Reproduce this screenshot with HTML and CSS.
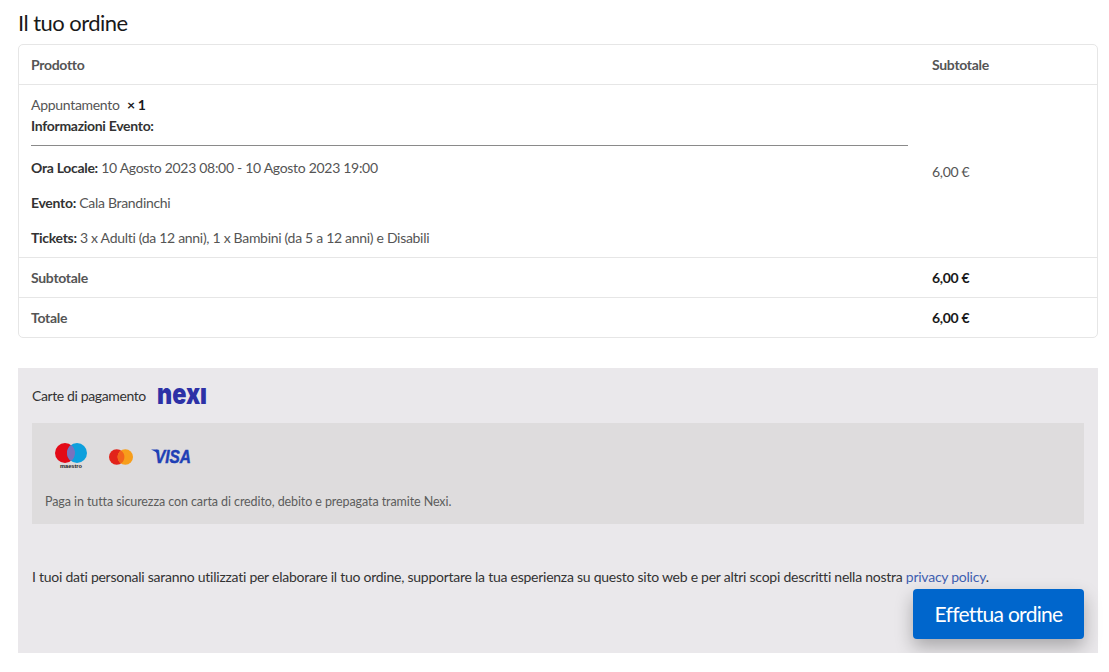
FILE: index.html
```html
<!DOCTYPE html>
<html lang="it">
<head>
<meta charset="utf-8">
<title>Il tuo ordine</title>
<link rel="stylesheet" href="styles.css">
</head>
<body>
<main class="page">
  <h3 class="title">Il tuo ordine</h3>
  <div class="order">
    <div class="row head">
      <div class="col-a strong">Prodotto</div>
      <div class="col-b strong">Subtotale</div>
    </div>
    <div class="row item">
      <div class="col-a">
        <div class="line">Appuntamento <b class="qty">× 1</b></div>
        <div class="line"><b>Informazioni Evento:</b></div>
        <hr class="rule">
        <p class="info"><b>Ora Locale:</b> 10 Agosto 2023 08:00 - 10 Agosto 2023 19:00</p>
        <p class="info"><b>Evento:</b> Cala Brandinchi</p>
        <p class="info"><b>Tickets:</b> 3 x Adulti (da 12 anni), 1 x Bambini (da 5 a 12 anni) e Disabili</p>
      </div>
      <div class="col-b price">6,00 €</div>
    </div>
    <div class="row total">
      <div class="col-a strong">Subtotale</div>
      <div class="col-b"><b class="dark">6,00 €</b></div>
    </div>
    <div class="row total">
      <div class="col-a strong">Totale</div>
      <div class="col-b"><b class="dark">6,00 €</b></div>
    </div>
  </div>

  <section class="payment">
    <div class="method">
      <span>Carte di pagamento</span>
      <svg class="nexi" width="52" height="24" viewBox="0 0 52 24" role="img" aria-label="nexi">
        <text x="0" y="20" class="nexi-text" textLength="50" lengthAdjust="spacingAndGlyphs">nexı</text>
      </svg>
    </div>
    <div class="box">
      <div class="cards">
        <svg class="card-maestro" width="32" height="26" viewBox="0 0 32 26" role="img" aria-label="Maestro">
          <circle cx="10" cy="10" r="10" fill="#e30a17"/>
          <circle cx="22" cy="10" r="10" fill="#0ea0dd"/>
          <path d="M16 2a10 10 0 0 1 0 16a10 10 0 0 1 0-16z" fill="#7a72bd"/>
          <text x="16" y="25" class="maestro" textLength="22" lengthAdjust="spacingAndGlyphs">maestro</text>
        </svg>
        <svg class="card-master" width="24" height="16" viewBox="0 0 24 16" role="img" aria-label="Mastercard">
          <circle cx="7.700" cy="8" r="7.700" fill="#e2231a"/>
          <circle cx="16.300" cy="8" r="7.700" fill="#f79e1b"/>
          <path d="M12 1.600a7.700 7.700 0 0 1 0 12.800a7.700 7.700 0 0 1 0-12.800z" fill="#f2641c"/>
        </svg>
        <svg class="card-visa" width="40" height="15" viewBox="0 0 40 15" role="img" aria-label="Visa">
          <text x="4" y="13.500" class="visa" textLength="36" lengthAdjust="spacingAndGlyphs">VISA</text>
          <path d="M0 .500h6.500l1.500 6q-2.500-4-8-6z" fill="#1f3fb5"/>
        </svg>
      </div>
      <p class="note">Paga in tutta sicurezza con carta di credito, debito e prepagata tramite Nexi.</p>
    </div>
    <p class="privacy">I tuoi dati personali saranno utilizzati per elaborare il tuo ordine, supportare la tua esperienza su questo sito web e per altri scopi descritti nella nostra <a href="#">privacy policy</a>.</p>
    <div class="actions"><button class="submit" type="button">Effettua ordine</button></div>
  </section>
</main>
</body>
</html>
```
FILE: styles.css
```css
* { box-sizing: border-box; }
html, body { margin: 0; background: #fff; }
body {
  font-family: "Lato", "Liberation Sans", sans-serif;
  font-size: 14px;
  line-height: 21px;
  color: #555;
}
svg { overflow: visible; }
.page { padding: 11px 11px 0 18px; }
.title {
  margin: 0 0 9px;
  font-size: 22px;
  line-height: 24px;
  font-weight: 400;
  letter-spacing: -.55px;
  color: #19191a;
}
.order {
  border: 1px solid #e6e6e6;
  border-radius: 5px;
  letter-spacing: -.3px;
}
.row {
  display: flex;
  border-top: 1px solid #e6e6e6;
}
.row:first-child { border-top: 0; }
.col-a { width: 901px; padding: 0 12px; flex: none; }
.col-b { flex: 1; padding: 0 12px; }
.head, .total { align-items: center; }
.head { height: 39px; }
.total { height: 40px; }
.item { height: 173px; align-items: center; }
.item .col-a { padding-top: 9px; align-self: flex-start; }
.strong, b { font-weight: 700; }
.strong { color: #555; }
b { color: #333; }
.dark { color: #19191a; }
.qty { margin-left: 4px; color: #19191a; }
.line { height: 21px; }
.rule {
  margin: 9px 0 11px;
  border: 0;
  border-top: 1px solid #8a8a8a;
}
.info { margin: 0 0 14px; }
.payment {
  margin-top: 30px;
  height: 285px;
  padding: 17px 14px 0;
  background: #eae8eb;
}
.method {
  display: flex;
  align-items: center;
  gap: 11px;
  height: 21px;
  letter-spacing: -.38px;
  color: #333;
}
.nexi-text {
  font-family: "Inter", "Liberation Sans", sans-serif;
  font-size: 29px;
  font-weight: 900;
  letter-spacing: 0;
  fill: #2d31a6;
}
.box {
  margin-top: 17px;
  height: 101px;
  padding: 20px 13px 0;
  background: #dedcdd;
}
.cards {
  display: flex;
  align-items: flex-start;
  gap: 18px;
  padding-left: 10px;
  height: 28px;
}
.card-maestro { margin-right: 4px; }
.card-master { margin-top: 6px; }
.card-visa { margin-top: 6px; }
.maestro {
  font-family: "Liberation Sans", sans-serif;
  font-size: 6px;
  font-weight: 700;
  text-anchor: middle;
  fill: #222;
}
.visa {
  font-family: "Liberation Sans", sans-serif;
  font-size: 18px;
  font-weight: 700;
  font-style: italic;
  fill: #1f3fb5;
  stroke: #1f3fb5;
  stroke-width: .5px;
}
.note {
  margin: 20px 0 0;
  font-size: 12.500px;
  letter-spacing: -.09px;
  color: #5c5c5c;
}
.privacy {
  margin: 42px 0 0;
  letter-spacing: -.25px;
  color: #333;
}
.privacy a { color: #3f5fb0; text-decoration: none; }
.actions {
  display: flex;
  justify-content: flex-end;
  margin-top: 2px;
}
.submit {
  width: 171px;
  height: 50px;
  padding: 0 0 2px;
  border: 0;
  border-radius: 4px;
  background: #0066cc;
  color: #fff;
  font: 400 21px/1 "Lato", "Liberation Sans", sans-serif;
  letter-spacing: -.7px;
  box-shadow: 0 8px 18px rgba(0, 0, 0, .28);
}
```
